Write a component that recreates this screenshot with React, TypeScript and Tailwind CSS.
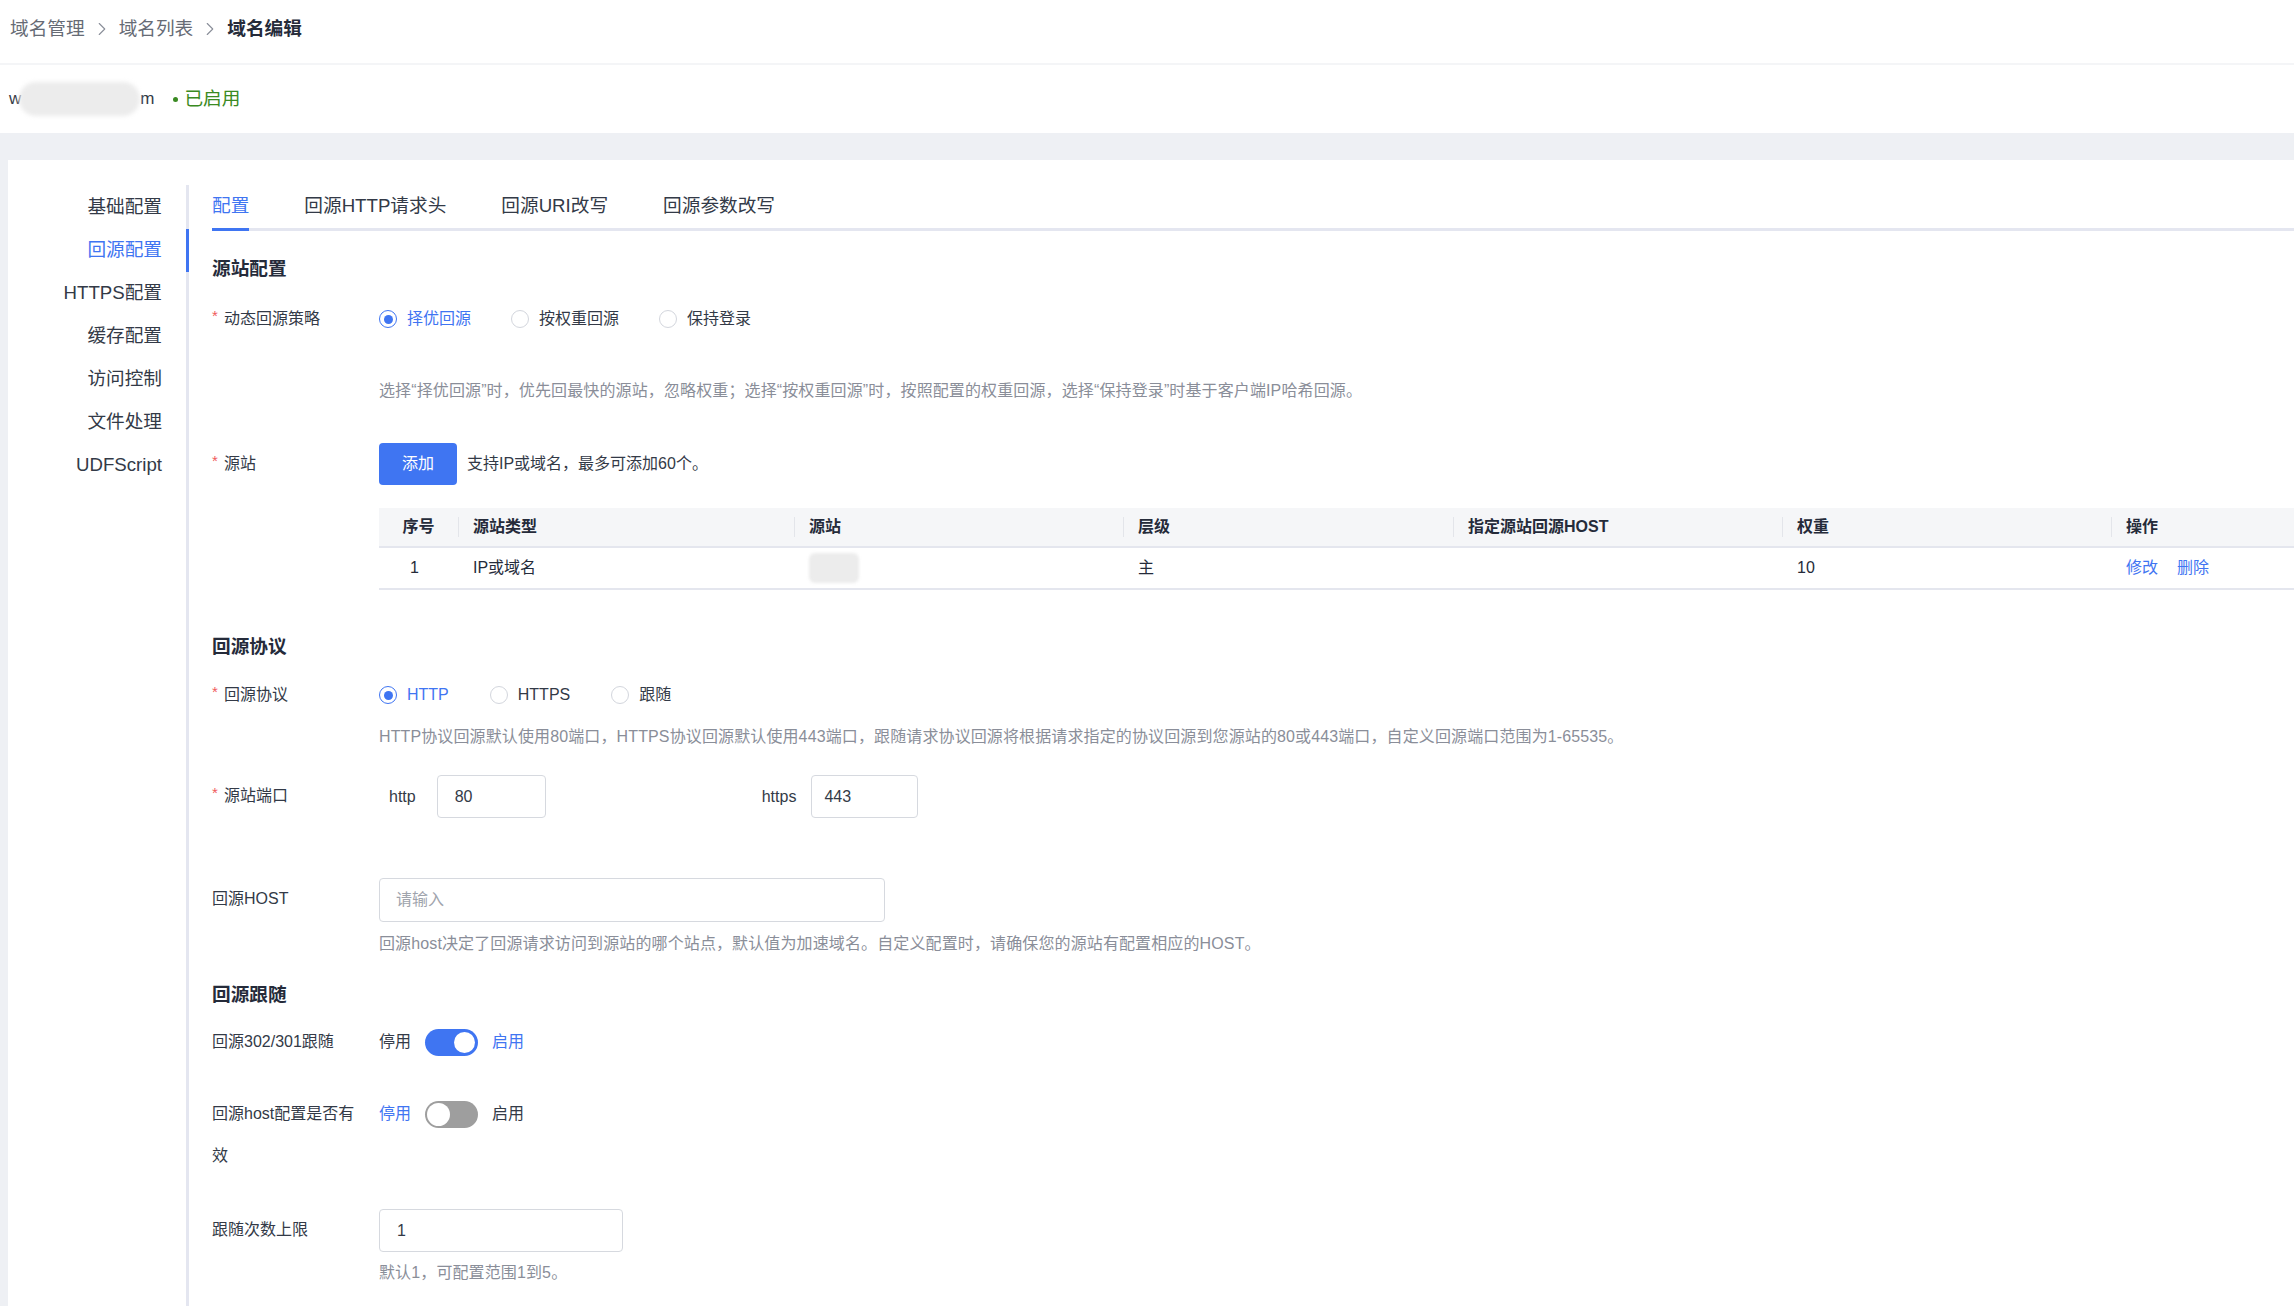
import { ChevronRight } from "lucide-react";

function Radio({ checked, label }: { checked?: boolean; label: string }) {
  return (
    <div className="flex items-center">
      {checked ? (
        <span className="w-[18px] h-[18px] rounded-full border-[1.5px] border-[#3f75f2] flex items-center justify-center">
          <span className="w-[9px] h-[9px] rounded-full bg-[#3f75f2]" />
        </span>
      ) : (
        <span className="w-[18px] h-[18px] rounded-full border border-[#d3d6dd] bg-white" />
      )}
      <span
        className={
          checked
            ? "ml-[10px] text-[16px] leading-[20px] text-[#3f75f2]"
            : "ml-[10px] text-[16px] leading-[20px] text-[#333a47]"
        }
      >
        {label}
      </span>
    </div>
  );
}

function Label({ children, required }: { children: React.ReactNode; required?: boolean }) {
  return (
    <div className="w-[167px] shrink-0 pr-[14px] flex text-[16px] leading-[42px] text-[#333a47]">
      {required && <span className="w-[12px] shrink-0 text-[#f05a5a] text-[15px] leading-[36px]">*</span>}
      <span>{children}</span>
    </div>
  );
}

function Switch({ on }: { on?: boolean }) {
  return on ? (
    <span className="w-[53px] h-[27px] rounded-full bg-[#3f75f2] flex items-center justify-end px-[3px]">
      <span className="w-[21px] h-[21px] rounded-full bg-white" />
    </span>
  ) : (
    <span className="w-[53px] h-[27px] rounded-full bg-[#9e9e9e] flex items-center justify-start px-[2px]">
      <span className="w-[23px] h-[23px] rounded-full bg-white" />
    </span>
  );
}

function Title({ children, className }: { children: React.ReactNode; className: string }) {
  return <div className={`${className} text-[18.67px] leading-[28px] font-bold text-[#252b3a]`}>{children}</div>;
}

function Helper({ children, className }: { children: React.ReactNode; className: string }) {
  return (
    <div className={`${className} pl-[167px] text-[16px] leading-[24px] tracking-[0.12px] text-[#8a8e99]`}>
      {children}
    </div>
  );
}

const sideItems = ["基础配置", "回源配置", "HTTPS配置", "缓存配置", "访问控制", "文件处理", "UDFScript"];
const tabs = ["配置", "回源HTTP请求头", "回源URI改写", "回源参数改写"];
const cols = ["序号", "源站类型", "源站", "层级", "指定源站回源HOST", "权重", "操作"];

export default function App() {
  return (
    <div className="min-h-screen bg-[#eef0f4] font-['Liberation_Sans','Noto_Sans_CJK_SC',sans-serif] overflow-hidden">
      {/* breadcrumb */}
      <div className="h-[63px] bg-white flex items-center pb-[6px] pl-[10px] text-[18.67px] leading-[28px]">
        <span className="text-[#666b75]">域名管理</span>
        <ChevronRight className="mx-[6px] w-[22px] h-[22px] text-[#8a8e99]" strokeWidth={1.2} />
        <span className="text-[#666b75]">域名列表</span>
        <ChevronRight className="mx-[6px] w-[22px] h-[22px] text-[#8a8e99]" strokeWidth={1.2} />
        <span className="font-bold text-[#252b3a]">域名编辑</span>
      </div>
      <div className="h-[2px] bg-[#f4f5f7]" />
      {/* domain */}
      <div className="h-[68px] bg-white flex items-center pl-[9px]">
        <span className="text-[17px] leading-[24px] text-[#333a47]">w</span>
        <span className="-ml-[2px] w-[121px] h-[34px] rounded-full bg-[#ececec] blur-[2px]" />
        <span className="text-[17px] leading-[24px] text-[#333a47]">m</span>
        <span className="ml-[19px] w-[5px] h-[5px] rounded-full bg-[#3a8a22]" />
        <span className="ml-[6px] text-[18.67px] leading-[28px] text-[#3a8a22]">已启用</span>
      </div>
      {/* main card */}
      <div className="pt-[27px] pl-[8px]">
        <div className="bg-white flex min-h-[1146px]">
          <aside className="w-[181px] shrink-0 mt-[25px] border-r-[3px] border-[#e4e6f0]">
            {sideItems.map((s, i) => (
              <div
                key={s}
                className={
                  i === 1
                    ? "relative h-[43px] flex items-center justify-end pr-[24px] text-[18.67px] text-[#3f75f2]"
                    : "relative h-[43px] flex items-center justify-end pr-[24px] text-[18.67px] text-[#333a47]"
                }
              >
                {s}
                {i === 1 && <span className="absolute -right-[3px] top-[1px] bottom-[-1px] w-[3px] bg-[#3f75f2]" />}
              </div>
            ))}
          </aside>
          <main className="flex-1 pl-[23px] pt-[26px] pb-[20px]">
            {/* tabs */}
            <div className="flex gap-[55px] border-b-[3px] border-[#e4e6f0]">
              {tabs.map((t, i) => (
                <div
                  key={t}
                  className={
                    i === 0
                      ? "h-[45px] -mb-[3px] border-b-[3px] border-[#3f75f2] text-[18.67px] leading-[39px] text-[#3f75f2]"
                      : "h-[45px] -mb-[3px] border-b-[3px] border-transparent text-[18.67px] leading-[39px] text-[#333a47]"
                  }
                >
                  {t}
                </div>
              ))}
            </div>

            <Title className="mt-[24px]">源站配置</Title>
            <div className="mt-[15px] flex">
              <Label required>动态回源策略</Label>
              <div className="h-[42px] flex items-center gap-[40px]">
                <Radio checked label="择优回源" />
                <Radio label="按权重回源" />
                <Radio label="保持登录" />
              </div>
            </div>
            <Helper className="mt-[39px]">
              选择“择优回源”时，优先回最快的源站，忽略权重；选择“按权重回源”时，按照配置的权重回源，选择“保持登录”时基于客户端IP哈希回源。
            </Helper>

            <div className="mt-[40px] flex">
              <Label required>源站</Label>
              <div className="h-[42px] flex items-center">
                <button className="w-[78px] h-[42px] rounded-[4px] bg-[#3f75f2] text-white text-[16px]">添加</button>
                <span className="ml-[10px] text-[16px] text-[#333a47]">支持IP或域名，最多可添加60个。</span>
              </div>
            </div>

            {/* table */}
            <div className="mt-[23px] ml-[167px] text-[16px] text-[#252b3a]">
              <div className="grid grid-cols-[79px_336px_329px_330px_329px_329px_1fr] h-[40px] bg-[#f5f6f8] border-b-2 border-[#e4e6ee]">
                {cols.map((c, i) => (
                  <div
                    key={c}
                    className={
                      i === 0
                        ? "relative flex items-center justify-center font-bold"
                        : "relative flex items-center pl-[15px] font-bold"
                    }
                  >
                    {i > 0 && <span className="absolute left-0 top-[9px] bottom-[9px] w-px bg-[#e3e5ea]" />}
                    {c}
                  </div>
                ))}
              </div>
              <div className="grid grid-cols-[79px_336px_329px_330px_329px_329px_1fr] h-[42px] border-b-2 border-[#e4e6ee] items-center">
                <div className="text-center pr-[8px]">1</div>
                <div className="pl-[15px]">IP或域名</div>
                <div className="pl-[15px]">
                  <div className="w-[50px] h-[30px] rounded-[6px] bg-[#ececec] blur-[1.5px]" />
                </div>
                <div className="pl-[15px]">主</div>
                <div className="pl-[15px]" />
                <div className="pl-[15px]">10</div>
                <div className="pl-[15px] flex gap-[19px] text-[#3f75f2]">
                  <span>修改</span>
                  <span>删除</span>
                </div>
              </div>
            </div>

            <Title className="mt-[43px]">回源协议</Title>
            <div className="mt-[13px] flex">
              <Label required>回源协议</Label>
              <div className="h-[42px] flex items-center gap-[41px]">
                <Radio checked label="HTTP" />
                <Radio label="HTTPS" />
                <Radio label="跟随" />
              </div>
            </div>
            <Helper className="mt-[9px]">
              HTTP协议回源默认使用80端口，HTTPS协议回源默认使用443端口，跟随请求协议回源将根据请求指定的协议回源到您源站的80或443端口，自定义回源端口范围为1-65535。
            </Helper>

            <div className="mt-[26px] flex">
              <Label required>源站端口</Label>
              <div className="h-[43px] flex items-center text-[16px] text-[#333a47]">
                <span className="ml-[10px]">http</span>
                <div className="ml-[21px] w-[109px] h-[43px] border border-[#d6d9df] rounded-[4px] flex items-center pl-[17px]">80</div>
                <span className="ml-[216px]">https</span>
                <div className="ml-[15px] w-[107px] h-[43px] border border-[#d6d9df] rounded-[4px] flex items-center pl-[12px]">443</div>
              </div>
            </div>

            <div className="mt-[60px] flex">
              <Label>回源HOST</Label>
              <div className="w-[506px] h-[44px] border border-[#d6d9df] rounded-[4px] flex items-center pl-[16px] text-[16px] text-[#a0a4ad]">
                请输入
              </div>
            </div>
            <Helper className="mt-[10px]">
              回源host决定了回源请求访问到源站的哪个站点，默认值为加速域名。自定义配置时，请确保您的源站有配置相应的HOST。
            </Helper>

            <Title className="mt-[25px]">回源跟随</Title>
            <div className="mt-[12px] flex">
              <Label>回源302/301跟随</Label>
              <div className="h-[42px] flex items-center gap-[14px] text-[16px]">
                <span className="text-[#333a47]">停用</span>
                <Switch on />
                <span className="text-[#3f75f2]">启用</span>
              </div>
            </div>

            <div className="mt-[30px] flex">
              <Label>回源host配置是否有效</Label>
              <div className="h-[42px] flex items-center gap-[14px] text-[16px]">
                <span className="text-[#3f75f2]">停用</span>
                <Switch />
                <span className="text-[#333a47]">启用</span>
              </div>
            </div>

            <div className="mt-[32px] flex">
              <Label>跟随次数上限</Label>
              <div className="w-[244px] h-[43px] border border-[#d6d9df] rounded-[4px] flex items-center pl-[17px] text-[16px] text-[#333a47]">
                1
              </div>
            </div>
            <Helper className="mt-[9px]">默认1，可配置范围1到5。</Helper>
          </main>
        </div>
      </div>
    </div>
  );
}
